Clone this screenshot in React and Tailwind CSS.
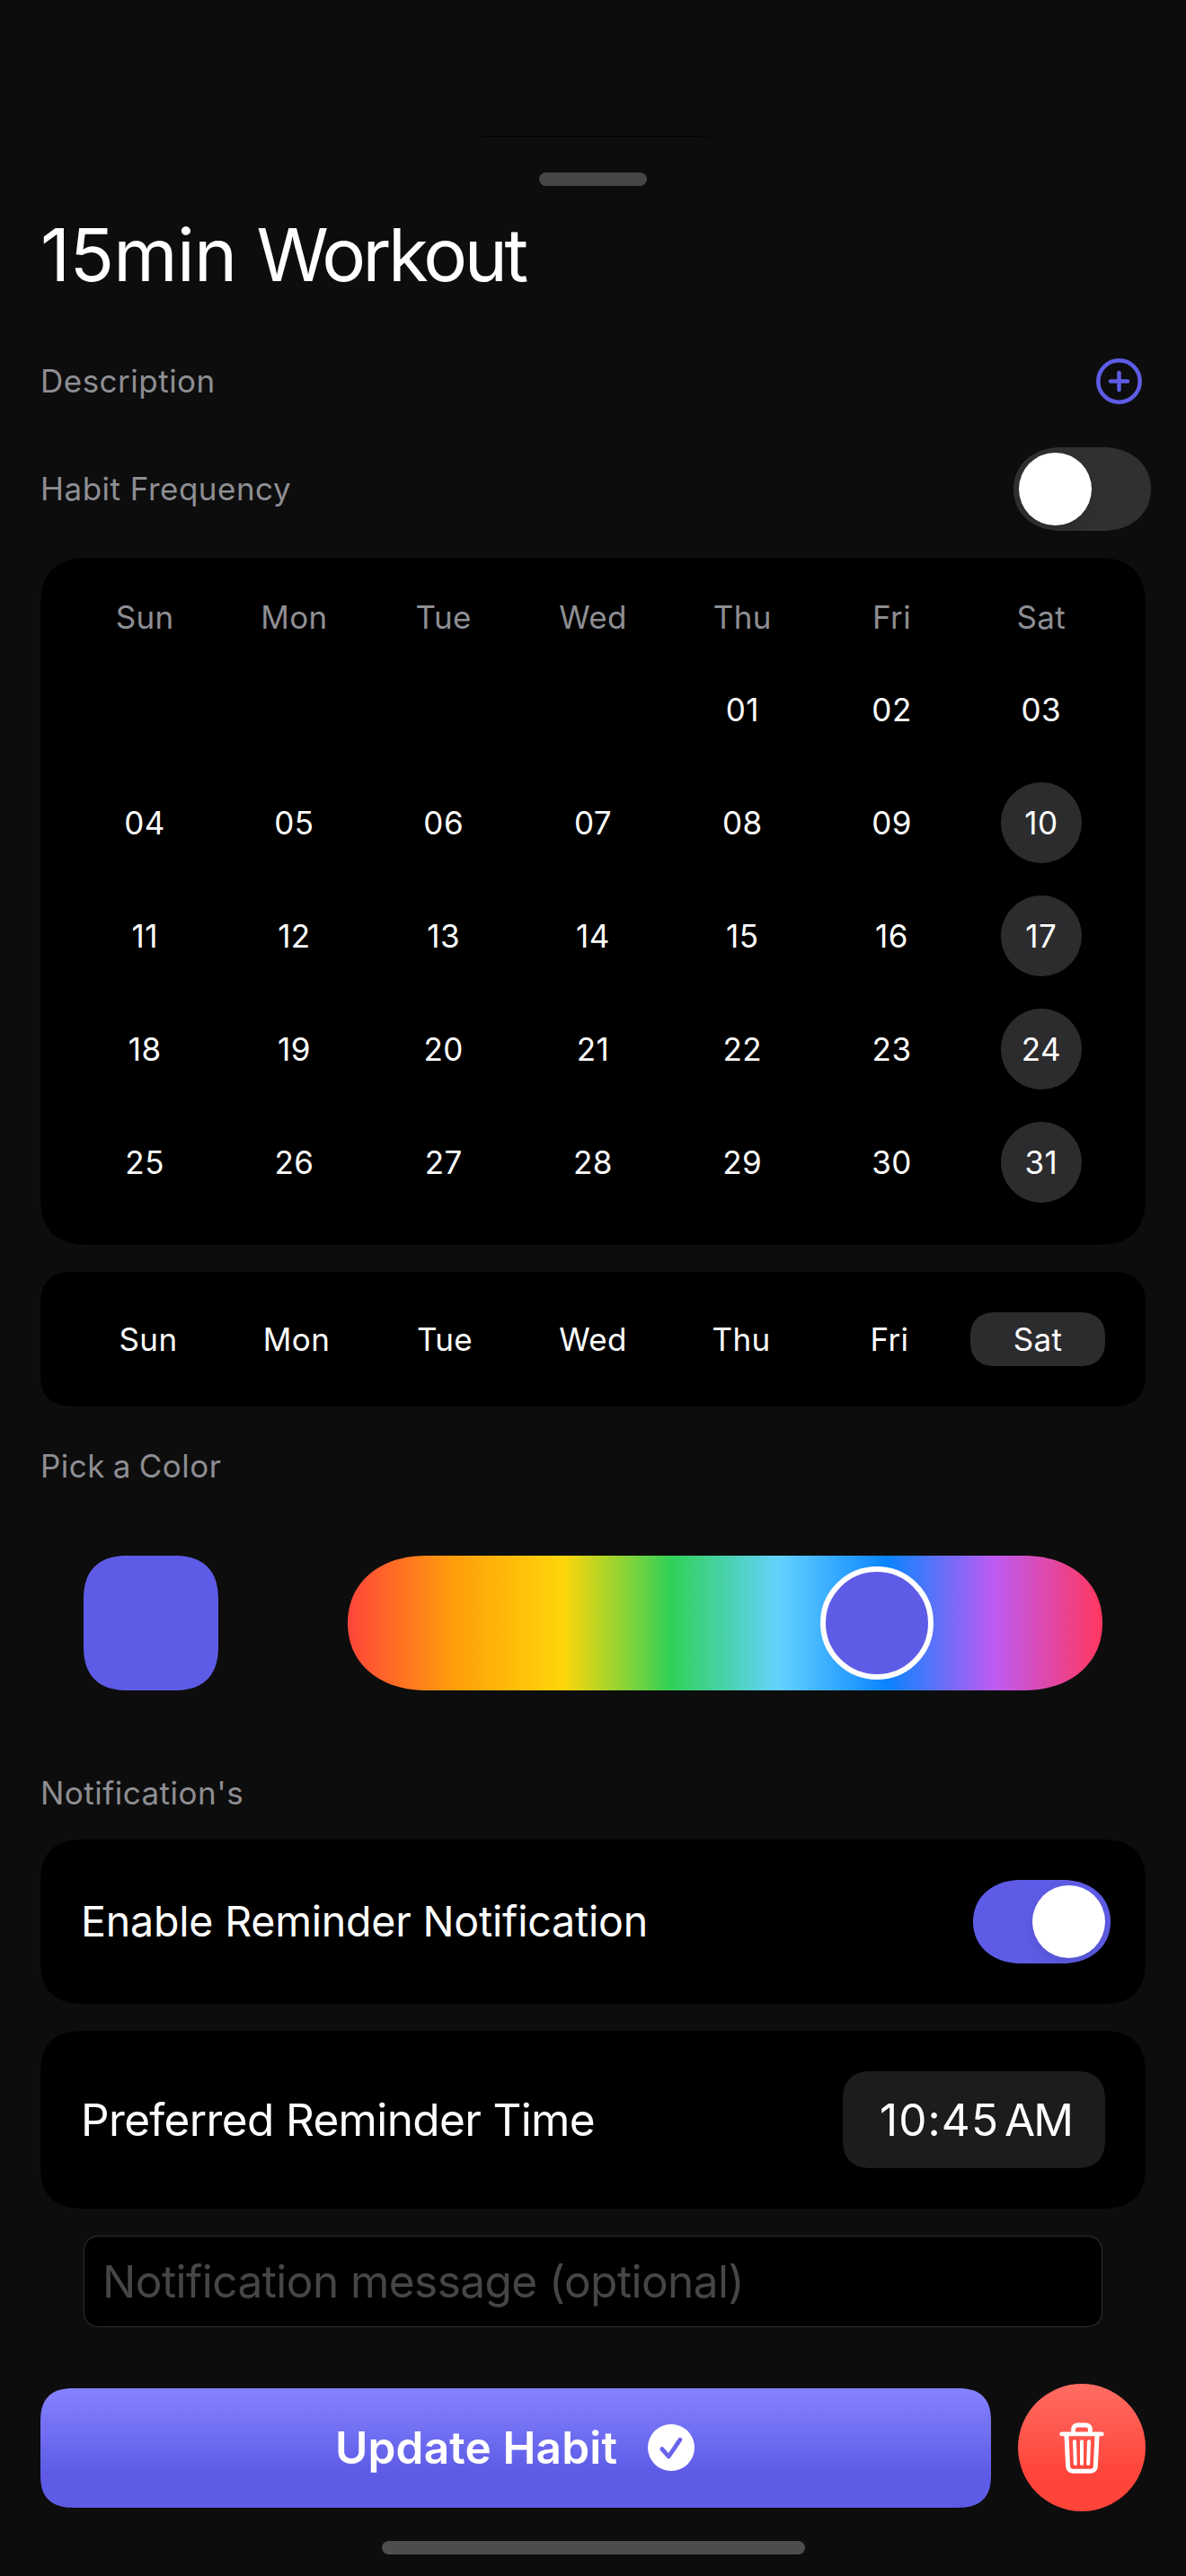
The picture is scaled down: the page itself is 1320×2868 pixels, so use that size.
const DAYS = ["Sun", "Mon", "Tue", "Wed", "Thu", "Fri", "Sat"];
const LEADING_BLANKS = 4;
const DATES = Array.from({ length: 31 }, (_, i) => String(i + 1).padStart(2, "0"));
const SELECTED_DATES = ["10", "17", "24", "31"];
const SELECTED_DAY = "Sat";

function Label({ children }) {
  return (
    <span className="block text-[35px] leading-[44px] tracking-[0.014em] text-[#8e8e93]">{children}</span>
  );
}

function Toggle({ on }) {
  return (
    <div
      className={
        "flex h-[93px] w-[153px] shrink-0 items-center rounded-[53px/46.5px] px-[6px] [corner-shape:superellipse(1.08)] " +
        (on ? "justify-end bg-[#5e5ce6]" : "justify-start bg-[#303032]")
      }
    >
      <div className="size-[81px] rounded-full bg-white shadow-[0_6px_14px_rgba(0,0,0,0.1)]" />
    </div>
  );
}

function PlusCircle() {
  return (
    <svg className="size-[51px]" viewBox="0 0 51 51" fill="none" stroke="#5e5ce6" strokeWidth="4.5" strokeLinecap="round">
      <circle cx="25.5" cy="25.5" r="23.2" />
      <path d="M16 25.5h19M25.5 16v19" />
    </svg>
  );
}

function CheckCircle() {
  return (
    <svg className="size-[52px]" viewBox="0 0 52 52" fill="none">
      <circle cx="26" cy="26" r="26" fill="#fff" />
      <path d="M15.8 27.6 23.2 36 36 17.2" stroke="#6765ec" strokeWidth="4.8" strokeLinecap="round" strokeLinejoin="round" />
    </svg>
  );
}

function Trash() {
  return (
    <svg className="h-[58px] w-[50px]" viewBox="0 0 50 58" fill="none" stroke="#fff" strokeLinecap="round" strokeLinejoin="round">
      <path d="M2.7 13.9h44.6" strokeWidth="4.9" />
      <path d="M15.6 13.5V8.6a4.6 4.6 0 0 1 4.6-4.6h9.6a4.6 4.6 0 0 1 4.6 4.6v4.9" strokeWidth="4.9" />
      <path d="M7.9 14.5 9.7 50.4a5 5 0 0 0 5 4.8h20.6a5 5 0 0 0 5-4.8L42.1 14.5" strokeWidth="5" />
      <path d="M17 22.3 17.8 47M25 22.3V47M33 22.3 32.2 47" strokeWidth="4" />
    </svg>
  );
}

function Calendar() {
  return (
    <section className="mt-[30px] h-[765px] rounded-[56px] bg-black px-[33px] pt-[33px] [corner-shape:superellipse(1.38)]">
      <div className="grid grid-cols-7 text-center text-[35px] leading-[66px] tracking-[0.01em] text-[#8e8e93]">
        {DAYS.map((d) => (
          <span key={d}>{d}</span>
        ))}
      </div>
      <div className="mt-[7px] grid auto-rows-[126px] grid-cols-7 place-items-center text-[35px] tracking-[0.014em] text-white">
        {Array.from({ length: LEADING_BLANKS }, (_, i) => (
          <span key={"blank" + i} />
        ))}
        {DATES.map((d) => (
          <span
            key={d}
            className={
              "flex size-[90px] items-center justify-center rounded-full " +
              (SELECTED_DATES.includes(d) ? "bg-[#2c2c2e]" : "")
            }
          >
            {d}
          </span>
        ))}
      </div>
    </section>
  );
}

function WeekdayPicker() {
  return (
    <section className="mt-[30px] flex h-[150px] items-center gap-[15px] rounded-[38px] bg-black px-[45px] [corner-shape:superellipse(1.38)]">
      {DAYS.map((d) => (
        <span
          key={d}
          className={
            "flex h-[60px] w-[150px] items-center justify-center rounded-[30px/28px] text-[35px] tracking-[0.01em] text-white [corner-shape:superellipse(1.3)] " +
            (d === SELECTED_DAY ? "bg-[#2c2c2e]" : "")
          }
        >
          {d}
        </span>
      ))}
    </section>
  );
}

function ColorPicker() {
  return (
    <section className="mt-[78px] flex items-center justify-between px-[48px]">
      <div className="size-[150px] rounded-[50px] bg-[#5e5ce6] [corner-shape:superellipse(1.3)]" />
      <div className="relative h-[150px] w-[840px] rounded-[87px/75px] bg-[linear-gradient(to_right,#ff453a,#ff9f0a,#ffd60a,#30d158,#64d2ff,#0a84ff,#bf5af2,#ff375f)] [corner-shape:superellipse(1.1)]">
        <div className="absolute top-3 left-[526px] size-[126px] rounded-full border-[6px] border-white bg-[#5e5ce6]" />
      </div>
    </section>
  );
}

export default function App() {
  return (
    <main className="flex h-[2868px] w-[1320px] flex-col bg-[#0d0d0d] px-[45px] font-[Inter,sans-serif]">
      <div className="mx-auto mt-[151px] h-px w-[275px] shrink-0 bg-[linear-gradient(to_right,transparent,#000_6%,#000_94%,transparent)]" />
      <div className="mx-auto mt-[40px] h-[15px] w-[120px] shrink-0 rounded-full bg-[#464648]" />

      <h1 className="mt-[35px] text-[81.5px] leading-[84px] tracking-[-0.009em] text-white">
        15min <span className="tracking-[-0.043em]">Workout</span>
      </h1>

      <div className="mt-[73px] flex h-[51px] items-center justify-between pr-[4px]">
        <div className="pb-[2px]">
          <Label>Description</Label>
        </div>
        <PlusCircle />
      </div>
      <div className="-mr-[6px] mt-[48px] flex h-[93px] items-center justify-between">
        <div className="pb-[2px]">
          <Label>Habit Frequency</Label>
        </div>
        <Toggle on={false} />
      </div>

      <Calendar />
      <WeekdayPicker />

      <div className="mt-[44px] [word-spacing:-1.5px]">
        <Label>Pick a Color</Label>
      </div>
      <ColorPicker />

      <div className="mt-[92px]">
        <Label>Notification's</Label>
      </div>
      <section className="mt-[30px] flex h-[183px] items-center justify-between rounded-[50px] bg-black pr-[39px] pl-[45px] [corner-shape:superellipse(1.38)]">
        <span className="pt-px text-[46.5px] tracking-[-0.004em] text-white">Enable Reminder Notification</span>
        <Toggle on />
      </section>
      <section className="mt-[30px] flex h-[198px] items-center justify-between rounded-[50px] bg-black px-[45px] [corner-shape:superellipse(1.38)]">
        <span className="text-[49.5px] tracking-[-0.013em] text-white">Preferred Reminder Time</span>
        <div className="flex h-[108px] w-[292px] items-center justify-end rounded-[34px] bg-[#1c1c1e] pr-[37px] text-[49.5px] text-white [corner-shape:superellipse(1.38)]">
          <span className="tracking-[0.022em]">10:45</span>
          <span className="ml-[6px] tracking-[-0.04em]">AM</span>
        </div>
      </section>
      <div className="mx-[48px] mt-[30px] flex h-[102px] items-center rounded-[19px] border border-[#2f2f31] bg-black pl-[20px] [corner-shape:superellipse(1.3)]">
        <span className="text-[49.5px] tracking-[-0.011em] text-[#464649]">Notification message (optional)</span>
      </div>

      <div className="mt-[63px] flex items-center justify-between">
        <button className="flex h-[133px] w-[1058px] items-center justify-center gap-[34px] rounded-[38px] bg-[linear-gradient(to_bottom,#8583ff,#5e5ce6_70%)] pr-[2px] text-[49.5px] font-semibold tracking-[0.0036em] text-white [corner-shape:superellipse(1.38)]">
          Update Habit
          <CheckCircle />
        </button>
        <button className="flex size-[142px] items-center justify-center rounded-full bg-[linear-gradient(to_bottom,#ff6c63,#ff453a_70%)]">
          <Trash />
        </button>
      </div>

      <div className="mx-auto mt-[33px] h-[15px] w-[471px] shrink-0 rounded-full bg-[#4d4d4d]" />
    </main>
  );
}
